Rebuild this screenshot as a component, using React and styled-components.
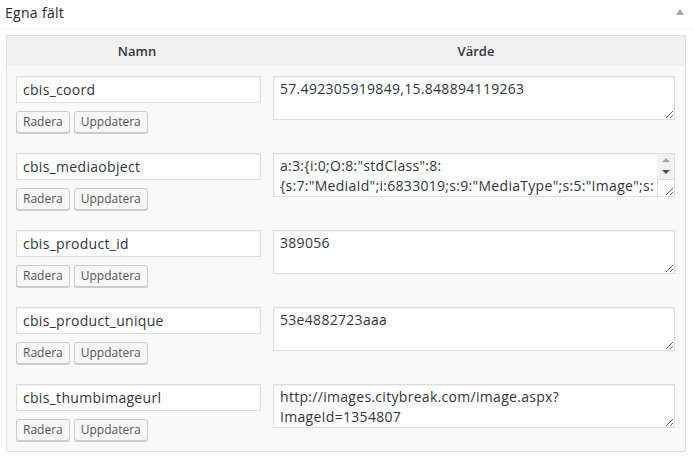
import React from "react";
import styled, { createGlobalStyle } from "styled-components";

const Global = createGlobalStyle`
  html, body {
    margin: 0;
    padding: 0;
    background: #fff;
    overflow: hidden;
  }
  body {
    font-family: "Open Sans", "Noto Sans", sans-serif;
    color: #32373c;
  }
`;

const Box = styled.section`
  background: #fff;
`;

const BoxHead = styled.header`
  display: flex;
  align-items: center;
  justify-content: space-between;
  height: 28px;
  padding: 0 10px 0 5px;
  border-bottom: 1px solid #eee;
`;

const Title = styled.h2`
  margin: 0;
  font-size: 14px;
  font-weight: 400;
  letter-spacing: 0.3px;
  line-height: 20px;
  color: #23282d;
  padding-bottom: 2px;
`;

const Toggle = styled.span`
  width: 0;
  height: 0;
  border-left: 4px solid transparent;
  border-right: 4px solid transparent;
  border-bottom: 6px solid #a0a5aa;
  margin-bottom: 5px;
`;

const Inside = styled.div`
  padding: 6px 8px 0 6px;
`;

const Table = styled.div`
  border: 1px solid #dfdfdf;
  background: #f9f9f9;
`;

const HeadRow = styled.div`
  display: grid;
  grid-template-columns: 260px 1fr;
  height: 30px;
  background: #f1f1f1;
`;

const HeadCell = styled.div`
  text-align: center;
  font-size: 13px;
  font-weight: 600;
  line-height: 30px;
  color: #32373c;
`;

const Row = styled.div`
  display: grid;
  grid-template-columns: 260px 1fr;
`;

const KeyCell = styled.div`
  padding: 10px 6px 10px 9px;
`;

const ValueCell = styled.div`
  padding: 10px 10px 0 6px;
`;

const fieldText = `
  font-family: "Open Sans", "Noto Sans", sans-serif;
  font-size: 14px;
  letter-spacing: 0.3px;
  color: #32373c;
`;

const KeyInput = styled.input`
  display: block;
  box-sizing: border-box;
  width: 100%;
  height: 27px;
  margin: 0;
  padding: 0 6px;
  border: 1px solid #ddd;
  border-radius: 0;
  background: #fff;
  box-shadow: inset 0 1px 2px rgba(0, 0, 0, 0.07);
  outline: none;
  ${fieldText}
`;

const Actions = styled.div`
  display: flex;
  gap: 4px;
  margin-top: 8px;
`;

const Button = styled.button`
  box-sizing: border-box;
  height: 22px;
  margin: 0;
  padding: 0 6px;
  border: 1px solid #ccc;
  border-radius: 3px;
  background: #f7f7f7;
  box-shadow: 0 1px 0 #ccc;
  font-family: "Open Sans", "Noto Sans", sans-serif;
  font-size: 12px;
  line-height: 20px;
  color: #555;
  cursor: pointer;
`;

const ValueWrap = styled.div`
  position: relative;
`;

const ValueArea = styled.textarea`
  display: block;
  box-sizing: border-box;
  width: 100%;
  height: 44px;
  margin: 0;
  padding: 2px ${(p) => (p.$scroll ? 19 : 6)}px 2px 6px;
  border: 1px solid #ddd;
  border-radius: 0;
  background: #fff;
  box-shadow: inset 0 1px 2px rgba(0, 0, 0, 0.07);
  line-height: 20px;
  resize: vertical;
  outline: none;
  overflow: hidden;
  ${fieldText}
`;

/* classic scrollbar drawn over the right edge of an overflowing textarea */
const ScrollBar = styled.div`
  position: absolute;
  top: 1px;
  right: 1px;
  bottom: 1px;
  width: 17px;
  display: flex;
  flex-direction: column;
  pointer-events: none;
`;

const Track = styled.div`
  height: 25px;
  background: #f1f1f1;
  display: flex;
  flex-direction: column;
`;

const Arrow = styled.div`
  height: 12px;
  display: flex;
  align-items: center;
  justify-content: center;

  &::before {
    content: "";
    width: 0;
    height: 0;
    border-left: 4px solid transparent;
    border-right: 4px solid transparent;
    ${(p) =>
      p.$down
        ? "border-top: 4px solid #505050;"
        : "border-bottom: 4px solid #a3a3a3;"}
  }
`;

const Corner = styled.div`
  flex: 1;
  box-sizing: border-box;
  border-top: 1px solid #dcdcdc;
  border-left: 1px solid #dcdcdc;
`;

const fields = [
  { key: "cbis_coord", value: "57.492305919849,15.848894119263" },
  {
    key: "cbis_mediaobject",
    value:
      'a:3:{i:0;O:8:"stdClass":8:{s:7:"MediaId";i:6833019;s:9:"MediaType";s:5:"Image";s:3:"Url";s:55:"http://images.citybreak.com/image.aspx?ImageId=6833019";s:5:"Width";i:1024;s:6:"Height";i:683;}}',
    scroll: true,
  },
  { key: "cbis_product_id", value: "389056" },
  { key: "cbis_product_unique", value: "53e4882723aaa" },
  {
    key: "cbis_thumbimageurl",
    value: "http://images.citybreak.com/image.aspx?ImageId=1354807",
  },
];

export default function App() {
  return (
    <>
      <Global />
      <Box>
        <BoxHead>
          <Title>Egna fält</Title>
          <Toggle />
        </BoxHead>
        <Inside>
          <Table>
            <HeadRow>
              <HeadCell>Namn</HeadCell>
              <HeadCell>Värde</HeadCell>
            </HeadRow>
            {fields.map((f) => (
              <Row key={f.key}>
                <KeyCell>
                  <KeyInput type="text" defaultValue={f.key} />
                  <Actions>
                    <Button type="button">Radera</Button>
                    <Button type="button">Uppdatera</Button>
                  </Actions>
                </KeyCell>
                <ValueCell>
                  <ValueWrap>
                    <ValueArea
                      $scroll={f.scroll}
                      defaultValue={f.value}
                      spellCheck={false}
                    />
                    {f.scroll && (
                      <ScrollBar>
                        <Track>
                          <Arrow />
                          <Arrow $down />
                        </Track>
                        <Corner />
                      </ScrollBar>
                    )}
                  </ValueWrap>
                </ValueCell>
              </Row>
            ))}
          </Table>
        </Inside>
      </Box>
    </>
  );
}
